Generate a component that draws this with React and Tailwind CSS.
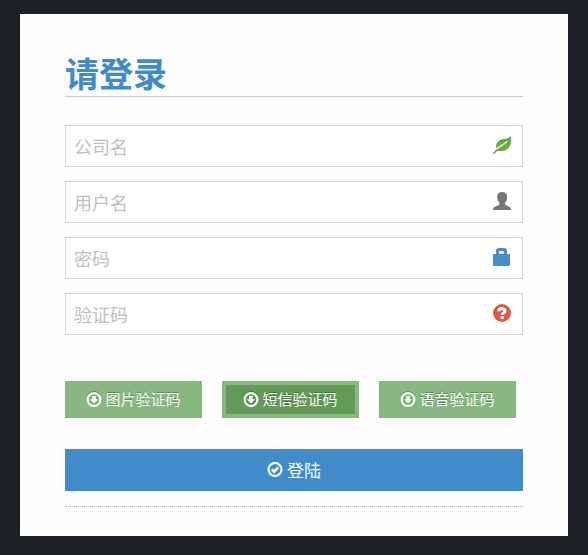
const LeafIcon = () => (
  <svg viewBox="0 0 18 18" className="size-[18px]" aria-hidden="true">
    <path
      d="M18 0C18.5 5 18 9.8 15 12.6 12.4 15.2 8 15.8 4.6 14.8L1.3 17.8Q.3 18.2 0 17.3C.5 16.2 2 14.8 3.4 13.6 2.2 9.6 3.4 5.8 7 4 10.4 2.2 15 3.2 18 0Z"
      fill="currentColor"
    />
    <path d="M3 13.1C6 10.2 10.6 9.4 14.2 5.4" fill="none" stroke="#fff" strokeWidth="1.4" />
  </svg>
);

const UserIcon = () => (
  <svg viewBox="0 0 18 18" className="size-[18px]" fill="currentColor" aria-hidden="true">
    <path d="M9.2 0C12.6 0 14.2 2 14.2 4.8 14.2 7.2 13.6 9.4 12 10.8V12.4C12.6 13.4 16 14.2 17.2 15.4 17.9 16.1 18 17 18 18H0C0 17 .1 16.1.8 15.4 2 14.2 5.8 13.4 6.4 12.4V10.8C4.8 9.4 4.2 7.2 4.2 4.8 4.2 2 5.8 0 9.2 0Z" />
  </svg>
);

const LockIcon = () => (
  <svg viewBox="0 0 18 18" className="size-[18px]" fill="currentColor" aria-hidden="true">
    <path
      fillRule="evenodd"
      d="M3 6V3Q3 0 6 0H11Q14 0 14 3V6H16Q17 6 17 7V17Q17 18 16 18H1Q0 18 0 17V7Q0 6 1 6ZM6 6H11V4Q11 3 10 3H7Q6 3 6 4Z"
    />
  </svg>
);

const QuestionIcon = () => (
  <svg viewBox="0 0 18 18" className="size-[18px]" aria-hidden="true">
    <circle cx="9" cy="9" r="9" fill="currentColor" />
    <path d="M5.8 7.2C5.8 3.6 12 3.6 12 7 12 8.8 9.2 9 9.2 11" fill="none" stroke="#fff" strokeWidth="2.9" />
    <path d="M7.6 12.3h3.1v2.8H7.6z" fill="#fff" />
  </svg>
);

const DownloadIcon = () => (
  <svg viewBox="0 0 16 16" className="size-4 shrink-0 drop-shadow-[0_-1px_0_rgba(0,0,0,0.25)]" aria-hidden="true">
    <circle cx="8" cy="7.5" r="6.4" fill="none" stroke="currentColor" strokeWidth="2.2" />
    <path d="M6.2 3.8h3.6v3.4h2.4L8 11.6 3.8 7.2h2.4z" fill="currentColor" />
  </svg>
);

const CheckIcon = () => (
  <svg viewBox="0 0 16 16" className="size-4 shrink-0" aria-hidden="true">
    <circle cx="8" cy="7.5" r="6.5" fill="none" stroke="currentColor" strokeWidth="2.1" />
    <path d="M4.8 7.4l2.4 2.2 4-4.2" fill="none" stroke="currentColor" strokeWidth="2.6" />
  </svg>
);

const fields = [
  { name: "company", label: "公司名", type: "text", icon: LeafIcon, tone: "text-[#69aa46]" },
  { name: "username", label: "用户名", type: "text", icon: UserIcon, tone: "text-[#777777]" },
  { name: "password", label: "密码", type: "password", icon: LockIcon, tone: "text-[#478fca]" },
  { name: "captcha", label: "验证码", type: "text", icon: QuestionIcon, tone: "text-[#dd5a43]" },
];

const codeButtons = [
  { id: "image", label: "图片验证码", active: false },
  { id: "sms", label: "短信验证码", active: true },
  { id: "voice", label: "语音验证码", active: false },
];

export default function App() {
  return (
    <div className="min-h-screen bg-[#1d2024] px-5 pt-3.5 pb-[19px] font-['Noto_Sans_CJK_SC',sans-serif]">
      <main className="bg-[#fdfdfd] px-[45px] pt-10 pb-[29px]">
        <h1 className="border-b border-[#cccccc] pb-1 text-[34px] leading-[38px] font-bold text-[#428bca]">
          请登录
        </h1>

        <form className="mt-7" onSubmit={(e) => e.preventDefault()}>
          <div className="flex flex-col gap-3.5">
            {fields.map(({ name, label, type, icon: Icon, tone }) => (
              <div key={name} className="relative">
                <input
                  name={name}
                  type={type}
                  placeholder={label}
                  aria-label={label}
                  className="block h-[42px] w-full border border-[#d5d5d5] bg-white pr-10 pl-2 text-[18px] text-[#858585] outline-none placeholder:text-[#c0c0c0]"
                />
                <span className={`pointer-events-none absolute top-[11px] right-3 ${tone}`}>
                  <Icon />
                </span>
              </div>
            ))}
          </div>

          <div className="mt-[46px] flex gap-5">
            {codeButtons.map((item) => (
              <button
                key={item.id}
                type="button"
                className={`flex h-[37px] max-w-[137px] flex-1 items-center justify-center gap-[3px] border-4 border-[#87b87f] text-[15px] whitespace-nowrap text-white text-shadow-[0_-1px_0_rgba(0,0,0,0.25)] ${
                  item.active ? "bg-[#629b58]" : "bg-[#87b87f]"
                }`}
              >
                <DownloadIcon />
                {item.label}
              </button>
            ))}
          </div>

          <button
            type="submit"
            className="mt-[31px] flex h-[42px] w-full items-center justify-center gap-1 bg-[#428bca] text-[17px] text-white"
          >
            <CheckIcon />
            登陆
          </button>
        </form>

        <hr className="mt-[15px] border-t border-dotted border-[#8db8dc]" />
      </main>
    </div>
  );
}
